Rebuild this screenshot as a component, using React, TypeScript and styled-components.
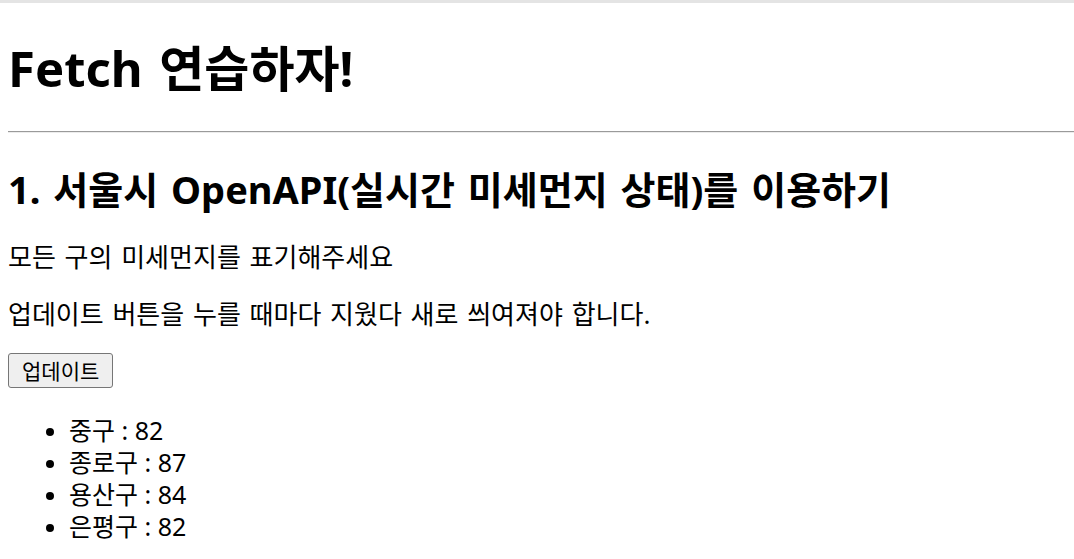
import React from 'react'
import styled, { createGlobalStyle } from 'styled-components'

const GlobalStyle = createGlobalStyle`
  html, body {
    margin: 0;
    padding: 0;
    background: #ffffff;
  }
  body {
    font-family: 'Noto Sans', 'Noto Sans CJK KR', sans-serif;
    color: #000000;
  }
`

const TopEdge = styled.div`
  height: 3px;
  background: #e4e4e4;
`

const Page = styled.main`
  padding-left: 8px;
`

const Title = styled.h1`
  margin: 33px 0 0;
  font-size: 49px;
  line-height: 64px;
  font-weight: 700;
  word-spacing: 4px;
`

const Divider = styled.hr`
  margin: 31px 0 0;
  border: none;
  border-top: 1px solid #9a9a9a;
  border-bottom: 1px solid #ececec;
  height: 0;
`

const Subtitle = styled.h2`
  margin: 32px 0 0;
  font-size: 38px;
  line-height: 48px;
  font-weight: 700;
  word-spacing: 3px;
`

const Text = styled.p`
  margin: 28px 0 0;
  font-size: 26px;
  line-height: 32px;
  word-spacing: 2px;

  & + & {
    margin-top: 25px;
  }
`

const UpdateButton = styled.button`
  display: block;
  margin: 23px 0 0;
  height: 35px;
  padding: 0 13px;
  font-family: inherit;
  font-size: 21px;
  line-height: 28px;
  color: #000000;
  background: #efefef;
  border: 1px solid #767676;
  border-radius: 3px;
`

const DustList = styled.ul`
  margin: 26px 0 0;
  padding-left: 61px;
  font-size: 25px;
  line-height: 32px;
`

const DustItem = styled.li`
  &::marker {
    font-size: 22px;
  }
`

const districts = [
  { name: '중구', value: 82 },
  { name: '종로구', value: 87 },
  { name: '용산구', value: 84 },
  { name: '은평구', value: 82 },
]

const App = () => (
  <>
    <GlobalStyle />
    <TopEdge />
    <Page>
      <Title>Fetch 연습하자!</Title>
      <Divider />
      <Subtitle>1. 서울시 OpenAPI(실시간 미세먼지 상태)를 이용하기</Subtitle>
      <Text>모든 구의 미세먼지를 표기해주세요</Text>
      <Text>업데이트 버튼을 누를 때마다 지웠다 새로 씌여져야 합니다.</Text>
      <UpdateButton>업데이트</UpdateButton>
      <DustList>
        {districts.map((d) => (
          <DustItem key={d.name}>
            {d.name} : {d.value}
          </DustItem>
        ))}
      </DustList>
    </Page>
  </>
)

export default App
